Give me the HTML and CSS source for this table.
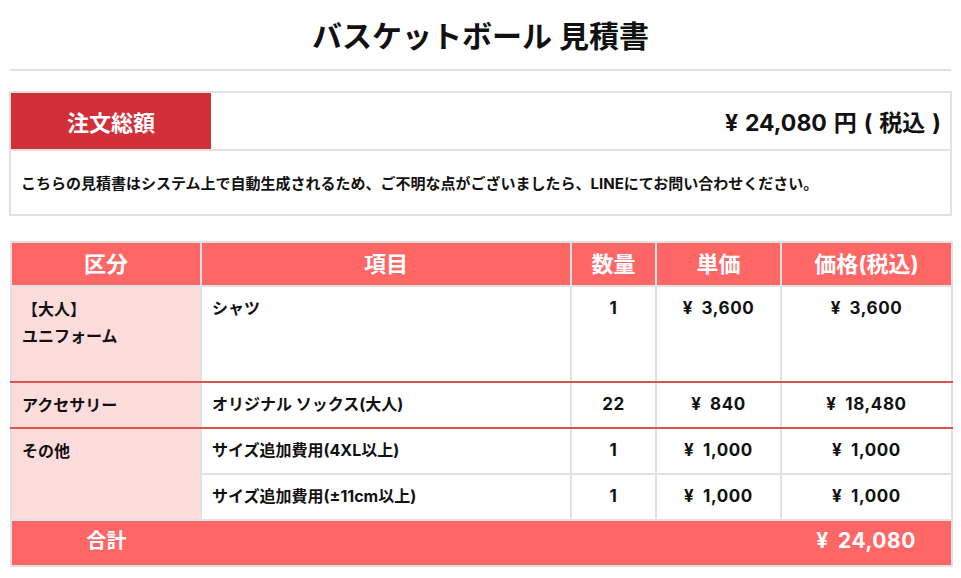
FILE: index.html
```html
<!DOCTYPE html>
<html lang="ja">
<head>
<meta charset="utf-8">
<title>バスケットボール 見積書</title>
<link rel="stylesheet" href="styles.css">
</head>
<body>
<main class="page">
  <h1 class="title">バスケットボール 見積書</h1>
  <hr class="rule">

  <section class="summary">
    <div class="summary-head">
      <div class="summary-label">注文総額</div>
      <div class="summary-amount">¥ 24,080 円 ( 税込 )</div>
    </div>
    <p class="summary-note">こちらの見積書はシステム上で自動生成されるため、ご不明な点がございましたら、LINEにてお問い合わせください。</p>
  </section>

  <table class="quote">
    <colgroup>
      <col class="c-cat">
      <col class="c-item">
      <col class="c-qty">
      <col class="c-unit">
      <col class="c-price">
    </colgroup>
    <thead>
      <tr>
        <th>区分</th>
        <th>項目</th>
        <th>数量</th>
        <th>単価</th>
        <th>価格(税込)</th>
      </tr>
    </thead>
    <tbody>
      <tr class="sep tall">
        <td class="cat">【大人】<br>ユニフォーム</td>
        <td class="item">シャツ</td>
        <td class="num">1</td>
        <td class="num">¥ 3,600</td>
        <td class="num">¥ 3,600</td>
      </tr>
      <tr class="sep">
        <td class="cat">アクセサリー</td>
        <td class="item">オリジナル ソックス(大人)</td>
        <td class="num">22</td>
        <td class="num">¥ 840</td>
        <td class="num">¥ 18,480</td>
      </tr>
      <tr>
        <td class="cat" rowspan="2">その他</td>
        <td class="item">サイズ追加費用(4XL以上)</td>
        <td class="num">1</td>
        <td class="num">¥ 1,000</td>
        <td class="num">¥ 1,000</td>
      </tr>
      <tr>
        <td class="item">サイズ追加費用(±11cm以上)</td>
        <td class="num">1</td>
        <td class="num">¥ 1,000</td>
        <td class="num">¥ 1,000</td>
      </tr>
    </tbody>
    <tfoot>
      <tr class="total">
        <td class="total-label">合計</td>
        <td class="total-gap" colspan="3"></td>
        <td class="total-value">¥ 24,080</td>
      </tr>
    </tfoot>
  </table>
</main>
</body>
</html>
```
FILE: styles.css
```css
* { box-sizing: border-box; }

html, body {
  margin: 0;
  padding: 0;
  background: #ffffff;
}

body {
  font-family: "Inter", "Noto Sans CJK JP", sans-serif;
  font-weight: 700;
  color: #111111;
}

.page {
  padding: 0 10px;
}

.title {
  margin: 0;
  padding-top: 16px;
  font-size: 30px;
  line-height: 40px;
  font-weight: 700;
  text-align: center;
}

.rule {
  margin: 13px 0 0;
  border: 0;
  height: 2px;
  background: #dee2e6;
}

.summary {
  margin: 20px -1px 0;
  border: 2px solid #dee2e6;
}

.summary-head {
  display: flex;
  align-items: stretch;
  height: 58px;
  border-bottom: 2px solid #dee2e6;
}

.summary-label {
  width: 200px;
  flex: 0 0 200px;
  background: #d32f38;
  color: #ffffff;
  font-size: 22px;
  display: flex;
  align-items: center;
  justify-content: center;
}

.summary-amount {
  flex: 1;
  display: flex;
  align-items: center;
  justify-content: flex-end;
  padding-right: 9px;
  font-size: 23px;
  word-spacing: 1.5px;
}

.summary-note {
  margin: 0;
  padding: 21px 10px 18px;
  font-size: 15px;
  line-height: 24px;
}

.quote {
  width: 100%;
  margin-top: 25px;
  border-collapse: collapse;
  table-layout: fixed;
}

.c-cat { width: 190px; }
.c-item { width: 370px; }
.c-qty { width: 85px; }
.c-unit { width: 125px; }
.c-price { width: 171px; }

.quote th,
.quote td {
  border: 2px solid #dee2e6;
  padding: 9px 10px 11px;
  font-size: 16px;
  line-height: 24px;
  vertical-align: top;
  text-align: left;
}

.quote th {
  background: #ff6666;
  color: #ffffff;
  font-size: 22px;
  padding: 9px 10px;
  text-align: center;
  vertical-align: middle;
}

.quote td.cat {
  background: #fddcdc;
  padding-top: 9px;
  padding-bottom: 8px;
  line-height: 27px;
}

.quote td.num {
  text-align: center;
  font-size: 17px;
  letter-spacing: 0.6px;
  word-spacing: 4px;
}

.quote tr.tall td {
  height: 96px;
}

.quote tr.sep td {
  border-bottom-color: #d9534f;
}

.quote .total td {
  background: #ff6666;
  color: #ffffff;
  font-size: 20px;
  padding: 8px 10px 12px;
  vertical-align: middle;
  text-align: center;
}

.quote .total .total-value {
  font-size: 21px;
  letter-spacing: 0.5px;
  word-spacing: 4px;
}

.quote .total .total-label { border-right: none; }
.quote .total .total-gap { border-left: none; border-right: none; }
.quote .total .total-value { border-left: none; }
```
